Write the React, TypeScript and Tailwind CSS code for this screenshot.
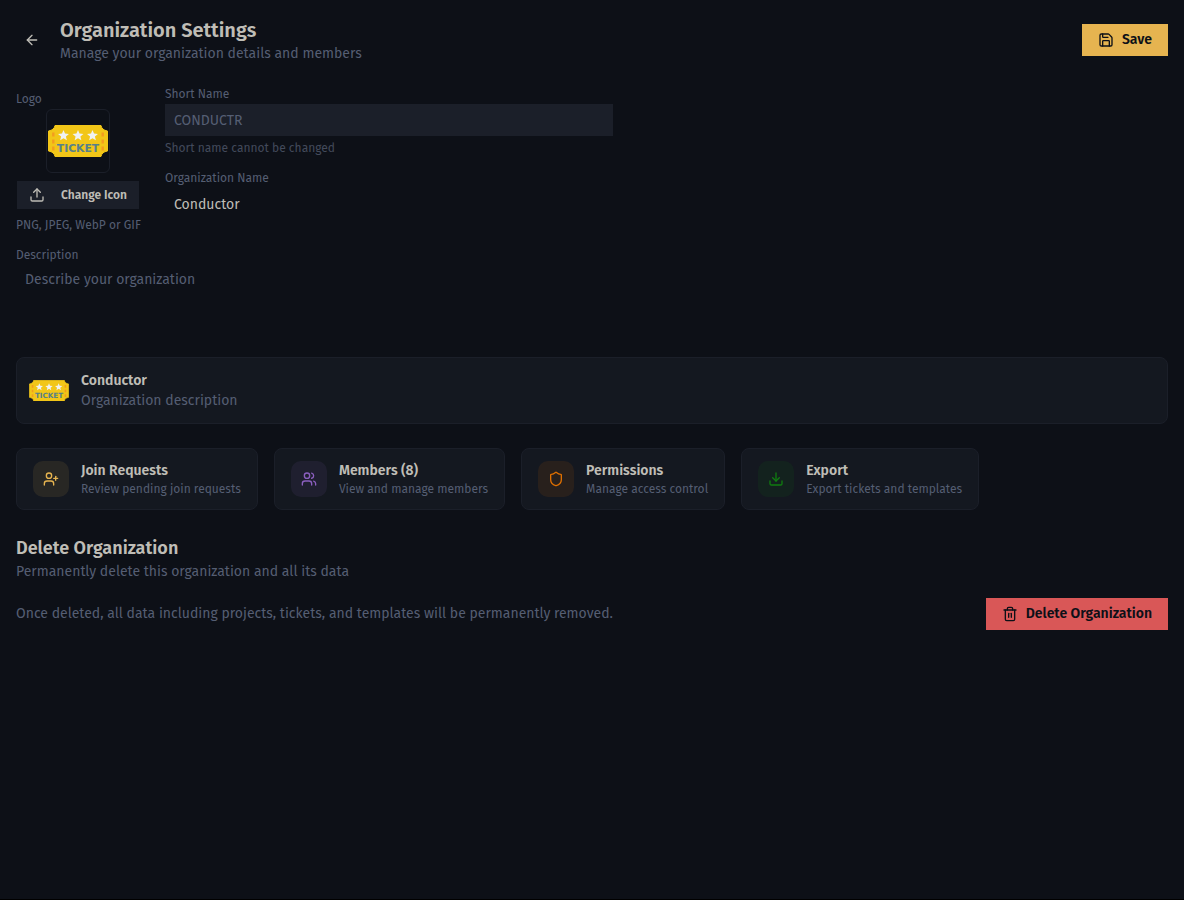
import { FC, useState } from 'react'
import {
	ArrowLeft,
	Download,
	LucideIcon,
	Save,
	Shield,
	Trash2,
	Upload,
	UserPlus,
	Users,
} from 'lucide-react'
import clsx from 'clsx'

interface ActionType {
	title: string
	description: string
	icon: LucideIcon
	color: string
}

const ACTIONS: ActionType[] = [
	{
		title: 'Join Requests',
		description: 'Review pending join requests',
		icon: UserPlus,
		color: 'bg-[#e6b450]/10 text-[#e6b450]',
	},
	{
		title: 'Members (8)',
		description: 'View and manage members',
		icon: Users,
		color: 'bg-[#8b5fbf]/10 text-[#8b5fbf]',
	},
	{
		title: 'Permissions',
		description: 'Manage access control',
		icon: Shield,
		color: 'bg-[#e07000]/10 text-[#e07000]',
	},
	{
		title: 'Export',
		description: 'Export tickets and templates',
		icon: Download,
		color: 'bg-[#107c10]/10 text-[#107c10]',
	},
]

const STAR = 'M0 -7 L1.9 -2.4 L6.8 -2 L3 1.2 L4.2 6 L0 3.4 L-4.2 6 L-3 1.2 L-6.8 -2 L-1.9 -2.4 Z'

const TicketLogo: FC<{ className?: string }> = ({ className }) => (
	<svg viewBox="0 0 60 32" className={className} role="img" aria-label="Ticket logo">
		<path
			d="M7 .5h46c.6 3 2.500 4.800 6.500 5.500v20c-4 .7-5.900 2.500-6.500 5.500H7c-.6-3-2.500-4.800-6.500-5.500V6C4.500 5.300 6.400 3.500 7 .5z"
			fill="#f2c618"
			stroke="#f2c618"
			strokeLinejoin="round"
		/>
		<path
			d="M5.300 7.500v18M54.700 7.500v18"
			stroke="#f39c1f"
			strokeWidth="2.400"
			strokeDasharray="4 3"
		/>
		{[15.5, 30, 44.5].map(x => (
			<path key={x} d={STAR} transform={`translate(${x} 10.500) scale(.8)`} fill="#f0f2f3" />
		))}
		<text
			x="30"
			y="27.200"
			textAnchor="middle"
			fontSize="10.800"
			fontWeight="700"
			fontFamily="DejaVu Sans, sans-serif"
			fill="#56808a"
		>
			TICKET
		</text>
	</svg>
)

const labelClass = 'block text-xs leading-5 text-[#555e73]'

const ActionCard: FC<{ action: ActionType }> = ({ action }) => {
	const Icon = action.icon
	return (
		<button
			type="button"
			className="flex items-center gap-3 rounded-lg border border-[#1b1f29] bg-[#141820] px-4 py-3 text-left hover:bg-[#1b1f29]"
		>
			<span
				className={clsx(
					'flex h-9 w-9 items-center justify-center rounded-[10px]',
					action.color
				)}
			>
				<Icon size={16} />
			</span>
			<span>
				<span className="block text-sm leading-5 font-semibold">{action.title}</span>
				<span className="block text-xs leading-4 text-[#555e73]">
					{action.description}
				</span>
			</span>
		</button>
	)
}

const App: FC = () => {
	const [name, setName] = useState('Conductor')
	const [description, setDescription] = useState('')

	return (
		<div className="min-h-screen border-b border-black bg-[#0d1017] p-4 font-['Fira_Sans','Roboto',sans-serif] text-sm text-[#bfbdb6]">
			<header className="flex items-center gap-3">
				<button
					type="button"
					aria-label="Back"
					className="flex h-8 w-8 items-center justify-center hover:bg-[#1b1f29]"
				>
					<ArrowLeft size={16} />
				</button>
				<div className="flex-1">
					<h1 className="text-xl leading-7 font-semibold">Organization Settings</h1>
					<p className="leading-5 text-[#555e73]">
						Manage your organization details and members
					</p>
				</div>
				<button
					type="button"
					className="flex h-8 items-center gap-2 bg-[#e6b450] px-4 font-semibold text-[#0d1017]"
				>
					<Save size={16} />
					Save
				</button>
			</header>

			<main>
				<section className="mt-5 flex gap-6">
					<div className="w-[125px] pt-[5px]">
						<p className={labelClass}>Logo</p>
						<div className="flex w-[124px] flex-col items-center gap-2">
							<div className="flex h-16 w-16 items-center justify-center rounded-md border border-[#1b1f29]">
								<TicketLogo className="w-[60px]" />
							</div>
							<button
								type="button"
								className="flex h-7 items-center gap-4 bg-[#1b1f29] px-3 text-xs font-semibold whitespace-nowrap"
							>
								<Upload size={16} />
								Change Icon
							</button>
						</div>
						<p className="mt-2 text-xs leading-4 whitespace-nowrap text-[#555e73]">
							PNG, JPEG, WebP or GIF
						</p>
					</div>

					<div className="w-full max-w-md">
						<label htmlFor="short-name" className={labelClass}>
							Short Name
						</label>
						<input
							id="short-name"
							type="text"
							value="CONDUCTR"
							disabled
							className="block h-8 w-full bg-[#1b1f29] px-[9px] text-[#555e73]"
						/>
						<p className="mt-1 text-xs leading-4 text-[#434a5b]">
							Short name cannot be changed
						</p>
						<label htmlFor="org-name" className={clsx(labelClass, 'mt-3')}>
							Organization Name
						</label>
						<input
							id="org-name"
							type="text"
							value={name}
							onChange={e => setName(e.target.value)}
							className="block h-8 w-full bg-transparent px-[9px] outline-none"
						/>
					</div>
				</section>

				<section className="mt-3">
					<label htmlFor="description" className={labelClass}>
						Description
					</label>
					<textarea
						id="description"
						value={description}
						onChange={e => setDescription(e.target.value)}
						placeholder="Describe your organization"
						className="block h-[76px] w-full resize-none bg-transparent px-[9px] py-[5px] leading-5 outline-none placeholder:text-[#555e73]"
					/>
				</section>

				<section className="mt-4 flex min-h-[67px] items-center gap-3 rounded-lg border border-[#1b1f29] bg-[#141820] px-3">
					<TicketLogo className="w-10" />
					<div>
						<h2 className="leading-5 font-semibold">{name}</h2>
						<p className="leading-5 text-[#555e73]">
							{description || 'Organization description'}
						</p>
					</div>
				</section>

				<section className="mt-6 flex flex-wrap gap-4">
					{ACTIONS.map(action => (
						<ActionCard key={action.title} action={action} />
					))}
				</section>

				<section className="mt-6">
					<h2 className="text-lg leading-7 font-semibold">Delete Organization</h2>
					<p className="leading-5 text-[#555e73]">
						Permanently delete this organization and all its data
					</p>
					<div className="mt-4 flex items-center justify-between gap-4">
						<p className="leading-5 text-[#555e73]">
							Once deleted, all data including projects, tickets, and templates will be
							permanently removed.
						</p>
						<button
							type="button"
							className="flex h-8 items-center gap-2 bg-[#d95757] px-4 font-semibold text-[#0d1017]"
						>
							<Trash2 size={16} />
							Delete Organization
						</button>
					</div>
				</section>
			</main>
		</div>
	)
}

export default App
